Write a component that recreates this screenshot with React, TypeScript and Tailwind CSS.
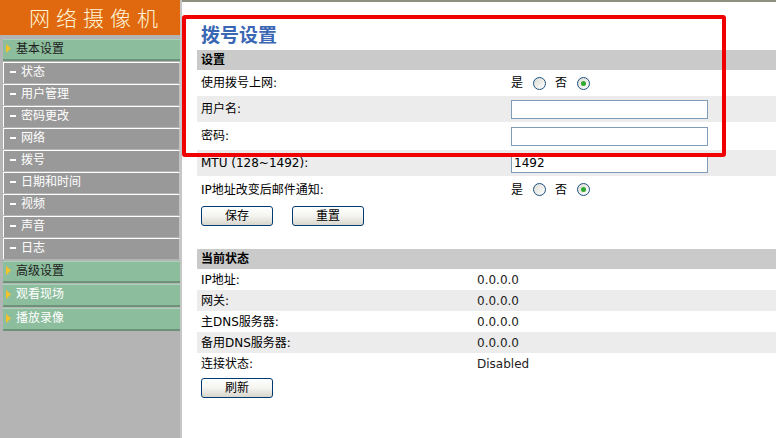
import React from "react";

const FONT = { fontFamily: '"DejaVu Sans", "Noto Sans CJK SC", sans-serif' };

type NavItem = { label: string; kind: "group" | "sub"; dark?: boolean };

const topNav: NavItem[] = [
  { label: "基本设置", kind: "group", dark: true },
  { label: "状态", kind: "sub" },
  { label: "用户管理", kind: "sub" },
  { label: "密码更改", kind: "sub" },
  { label: "网络", kind: "sub" },
  { label: "拨号", kind: "sub" },
  { label: "日期和时间", kind: "sub" },
  { label: "视频", kind: "sub" },
  { label: "声音", kind: "sub" },
  { label: "日志", kind: "sub" },
];

const bottomNav: NavItem[] = [
  { label: "高级设置", kind: "group", dark: true },
  { label: "观看现场", kind: "group" },
  { label: "播放录像", kind: "group" },
];

function Arrow() {
  return (
    <svg width="5" height="9" viewBox="0 0 5 9" className="mr-[5px] shrink-0">
      <polygon points="0,0 5,4.5 0,9" fill="#f2c22c" />
    </svg>
  );
}

function GroupItem({ item, className }: { item: NavItem; className: string }) {
  return (
    <div
      className={`flex items-center pl-[3px] pb-[2px] bg-[#8cbd9d] border-t border-t-[#a9d2b8] border-b-2 border-b-[#6c927a] text-[12px] ${
        item.dark ? "text-[#1d1d1d]" : "text-white"
      } ${className}`}
    >
      <Arrow />
      <span>{item.label}</span>
    </div>
  );
}

function SubItem({ item }: { item: NavItem }) {
  return (
    <div className="mt-[1px] h-[21px] flex items-center pl-[6px] pb-[3px] bg-[#999999] border-t border-l border-white border-r border-r-[#c4c4c4] text-[12px] text-white">
      <span className="w-[6px] h-[2px] bg-white mr-[5px]" />
      <span>{item.label}</span>
    </div>
  );
}

function Radio({ checked }: { checked?: boolean }) {
  return (
    <span className="w-[13px] h-[13px] rounded-full border border-[#1c5180] bg-gradient-to-br from-[#dcdcd5] to-[#ffffff] flex items-center justify-center">
      {checked && <span className="w-[5px] h-[5px] rounded-full bg-[#2fa82f]" />}
    </span>
  );
}

function YesNo() {
  return (
    <div className="flex items-center text-[12px] text-black">
      <span>是</span>
      <span className="ml-[10px]">
        <Radio />
      </span>
      <span className="ml-[9px]">否</span>
      <span className="ml-[10px]">
        <Radio checked />
      </span>
    </div>
  );
}

function TextBox({ value = "" }: { value?: string }) {
  return (
    <div className="w-[197px] h-[19px] border border-[#7f9db9] bg-white pl-[2px] text-[12px] leading-[17px] text-black">
      {value}
    </div>
  );
}

function XpButton({ label }: { label: string }) {
  return (
    <div className="w-[72px] h-[20px] rounded-[3px] border border-[#003c74] bg-gradient-to-b from-[#ffffff] via-[#f4f4f0] to-[#d8d6cc] flex items-center justify-center text-[12px] text-black">
      {label}
    </div>
  );
}

function FormRow({
  label,
  h,
  shade,
  children,
}: {
  label: string;
  h: string;
  shade?: boolean;
  children?: React.ReactNode;
}) {
  return (
    <div className={`flex items-center ${h} ${shade ? "bg-[#ececec]" : "bg-white"}`}>
      <div className="w-[314px] pl-[4px] text-[12px] text-black">{label}</div>
      {children}
    </div>
  );
}

function StatusRow({ label, value, shade }: { label: string; value: string; shade?: boolean }) {
  return (
    <div className={`flex items-center h-[21px] ${shade ? "bg-[#ececec]" : "bg-white"}`}>
      <div className="w-[280px] pl-[4px] text-[12px] text-black">{label}</div>
      <div className="text-[12px] text-[#222]">{value}</div>
    </div>
  );
}

export default function App() {
  return (
    <div className="w-[776px] h-[438px] flex bg-white overflow-hidden relative" style={FONT}>
      {/* left navigation */}
      <aside className="w-[182px] shrink-0 h-full bg-[#b4b4b4] border-r-2 border-r-[#c6c6c6] flex flex-col">
        <div className="h-[35px] bg-[#e0690f] flex items-center pl-[29px]">
          <span
            className="text-[21px] leading-none text-[#fff6d8] tracking-[6px]"
            style={{ fontFamily: '"Noto Sans CJK SC", sans-serif', fontWeight: 300 }}
          >
            网络摄像机
          </span>
        </div>
        <div className="pl-[3px] flex flex-col">
          <GroupItem item={topNav[0]} className="mt-[4px] h-[22px]" />
          {topNav.slice(1).map((it) => (
            <SubItem key={it.label} item={it} />
          ))}
          <GroupItem item={bottomNav[0]} className="mt-[2px] h-[22px]" />
          <GroupItem item={bottomNav[1]} className="mt-[1px] h-[23px]" />
          <GroupItem item={bottomNav[2]} className="mt-[1px] h-[23px]" />
        </div>
      </aside>

      {/* main panel */}
      <main className="flex-1 border-t-2 border-t-[#8f8f80] pl-[15px] flex flex-col">
        <div className="h-[48px] pt-[21px] pl-[4px]">
          <h1
            className="text-[19px] leading-[22px] font-bold text-[#3a67b4]"
            style={{ fontFamily: '"Noto Sans CJK SC", sans-serif' }}
          >
            拨号设置
          </h1>
        </div>

        <div className="h-[20px] bg-[#cacaca] pl-[4px] text-[12px] font-bold leading-[20px] text-black">
          设置
        </div>
        <FormRow label="使用拨号上网:" h="h-[26px]">
          <YesNo />
        </FormRow>
        <FormRow label="用户名:" h="h-[26px]" shade>
          <TextBox />
        </FormRow>
        <FormRow label="密码:" h="h-[28px]">
          <TextBox />
        </FormRow>
        <FormRow label="MTU (128~1492):" h="h-[26px]" shade>
          <TextBox value="1492" />
        </FormRow>
        <FormRow label="IP地址改变后邮件通知:" h="h-[27px]">
          <YesNo />
        </FormRow>

        <div className="flex gap-[19px] pl-[4px] mt-[3px]">
          <XpButton label="保存" />
          <XpButton label="重置" />
        </div>

        <div className="mt-[23px] h-[20px] bg-[#cacaca] pl-[4px] text-[12px] font-bold leading-[20px] text-black">
          当前状态
        </div>
        <StatusRow label="IP地址:" value="0.0.0.0" />
        <StatusRow label="网关:" value="0.0.0.0" shade />
        <StatusRow label="主DNS服务器:" value="0.0.0.0" />
        <StatusRow label="备用DNS服务器:" value="0.0.0.0" shade />
        <StatusRow label="连接状态:" value="Disabled" />
        <div className="pl-[4px] mt-[4px]">
          <XpButton label="刷新" />
        </div>
      </main>

      {/* red highlight frame */}
      <div className="absolute left-[182px] top-[15px] w-[544px] h-[142px] border-4 border-[#f00000] rounded-[3px] pointer-events-none" />
    </div>
  );
}
